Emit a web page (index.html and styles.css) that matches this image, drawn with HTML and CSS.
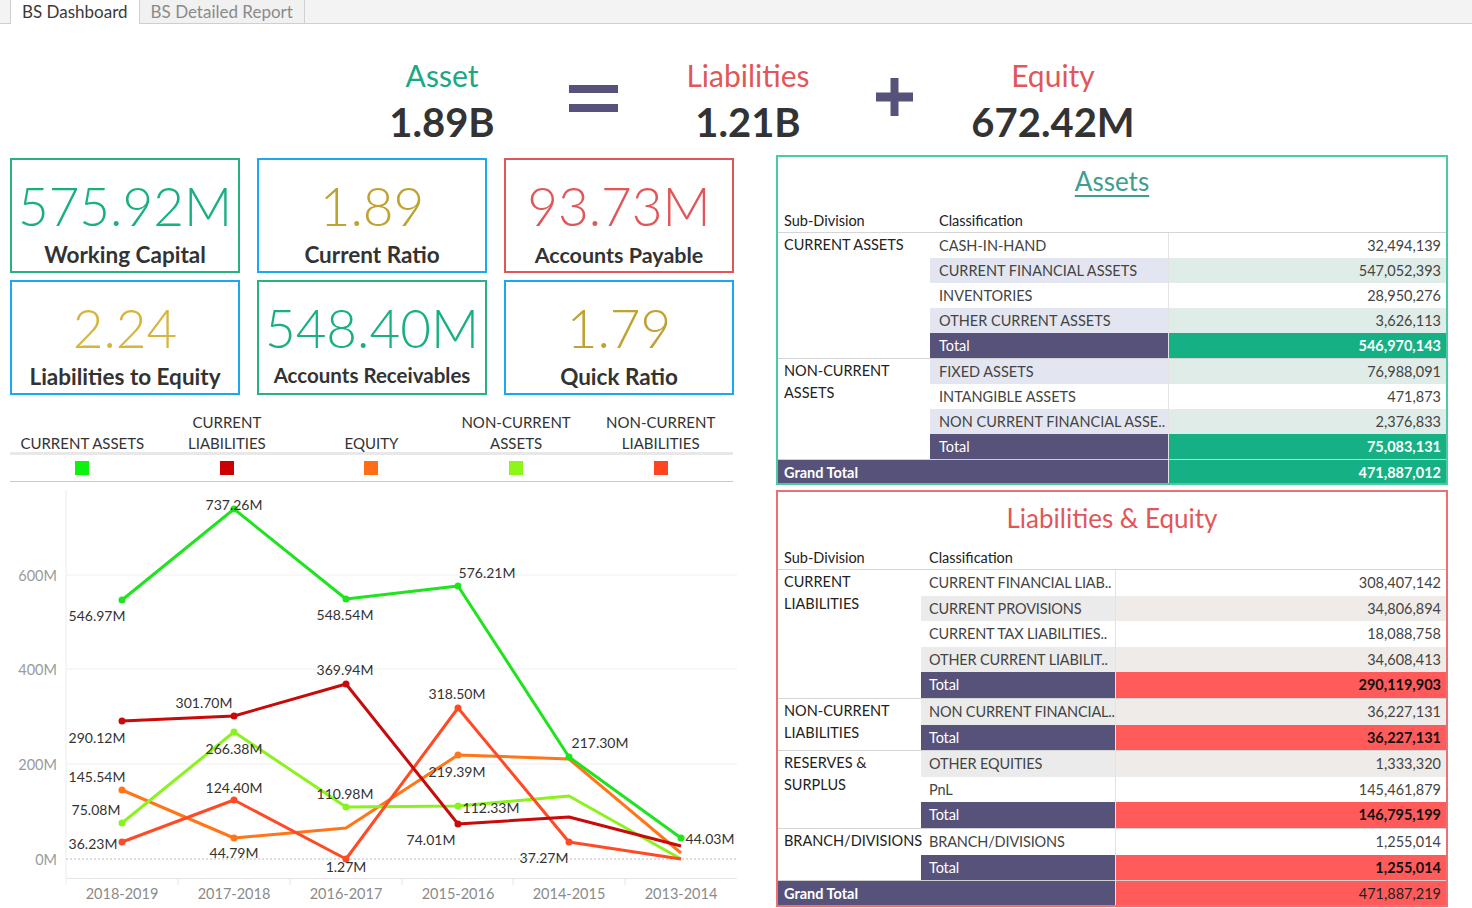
FILE: index.html
```html
<!DOCTYPE html>
<html>
<head>
<meta charset="utf-8">
<link rel="stylesheet" href="styles.css">
</head>
<body>
<div class="tabs">
  <div class="tab active">BS Dashboard</div>
  <div class="tab">BS Detailed Report</div>
</div>

<div class="equation">
  <div class="eq-item w-asset"><div class="eq-label c-green">Asset</div><div class="eq-value">1.89B</div></div>
  <div class="eq-op w-equals">
    <svg width="49" height="27" viewBox="0 0 49 27"><rect x="0" y="0" width="49" height="8" fill="#575279"/><rect x="0" y="19" width="49" height="8" fill="#575279"/></svg>
  </div>
  <div class="eq-item w-liab"><div class="eq-label c-red">Liabilities</div><div class="eq-value">1.21B</div></div>
  <div class="eq-op w-plus">
    <svg width="37" height="38" viewBox="0 0 37 38"><rect x="0" y="14.5" width="37" height="9" fill="#575279"/><rect x="14.5" y="0" width="8" height="38" fill="#575279"/></svg>
  </div>
  <div class="eq-item w-equity"><div class="eq-label c-red">Equity</div><div class="eq-value">672.42M</div></div>
</div>

<div class="main">
  <div class="left">
    <div class="kpis">
      <div class="kpi b-green"><div class="kpi-val v-green">575.92M</div><div class="kpi-lbl">Working Capital</div></div>
      <div class="kpi b-blue"><div class="kpi-val v-gold">1.89</div><div class="kpi-lbl">Current Ratio</div></div>
      <div class="kpi b-red"><div class="kpi-val v-red">93.73M</div><div class="kpi-lbl lbl-ap">Accounts Payable</div></div>
      <div class="kpi b-blue"><div class="kpi-val v-gold2">2.24</div><div class="kpi-lbl">Liabilities to Equity</div></div>
      <div class="kpi b-green"><div class="kpi-val v-green">548.40M</div><div class="kpi-lbl lbl-ar">Accounts Receivables</div></div>
      <div class="kpi b-blue"><div class="kpi-val v-gold">1.79</div><div class="kpi-lbl">Quick Ratio</div></div>
    </div>

    <div class="legend">
      <div class="legend-heads">
        <div class="lh">CURRENT ASSETS</div>
        <div class="lh">CURRENT<br>LIABILITIES</div>
        <div class="lh">EQUITY</div>
        <div class="lh">NON-CURRENT<br>ASSETS</div>
        <div class="lh">NON-CURRENT<br>LIABILITIES</div>
      </div>
      <div class="legend-swatches">
        <div class="ls"><span class="sw sw-ca"></span></div>
        <div class="ls"><span class="sw sw-cl"></span></div>
        <div class="ls"><span class="sw sw-eq"></span></div>
        <div class="ls"><span class="sw sw-na"></span></div>
        <div class="ls"><span class="sw sw-nl"></span></div>
      </div>
    </div>

    <svg class="chart" width="745" height="426" viewBox="0 482 745 426">
      <g class="grid">
        <line x1="66" y1="490" x2="66" y2="885" stroke="#ececec" stroke-width="1"/>
        <line x1="66" y1="575" x2="737" y2="575" stroke="#efefef" stroke-width="1"/>
        <line x1="66" y1="669" x2="737" y2="669" stroke="#efefef" stroke-width="1"/>
        <line x1="66" y1="764" x2="737" y2="764" stroke="#efefef" stroke-width="1"/>
        <line x1="66" y1="859" x2="737" y2="859" stroke="#bdbdbd" stroke-width="1" stroke-dasharray="2 2"/>
        <line x1="66" y1="878.5" x2="737" y2="878.5" stroke="#e6e6e6" stroke-width="1"/>
        <line x1="178" y1="878" x2="178" y2="885" stroke="#e6e6e6"/>
        <line x1="290" y1="878" x2="290" y2="885" stroke="#e6e6e6"/>
        <line x1="402" y1="878" x2="402" y2="885" stroke="#e6e6e6"/>
        <line x1="513" y1="878" x2="513" y2="885" stroke="#e6e6e6"/>
        <line x1="625" y1="878" x2="625" y2="885" stroke="#e6e6e6"/>
      </g>
      <g class="ylab">
        <text x="57" y="581">600M</text>
        <text x="57" y="675">400M</text>
        <text x="57" y="770">200M</text>
        <text x="57" y="865">0M</text>
      </g>
      <g class="xlab">
        <text x="122" y="899">2018-2019</text>
        <text x="234" y="899">2017-2018</text>
        <text x="346" y="899">2016-2017</text>
        <text x="458" y="899">2015-2016</text>
        <text x="569" y="899">2014-2015</text>
        <text x="681" y="899">2013-2014</text>
      </g>
      <g fill="none" stroke-width="3" stroke-linejoin="round">
        <polyline stroke="#ff7518" points="122,790 234,838 346,828 458,755 569,759 681,853"/>
        <polyline stroke="#8cf21e" points="122,823 234,732 346,807 458,806 569,796 681,859"/>
        <polyline stroke="#ff4a26" points="122,842 234,800 346,859 458,708 569,842 681,859"/>
        <polyline stroke="#c80a0a" points="122,721 234,716 346,684 458,824 569,817 681,846"/>
        <polyline stroke="#1fe31f" points="122,600 234,509 346,599 458,586 569,757 681,838"/>
      </g>
      <g>
        <circle cx="122" cy="790" r="3.5" fill="#ff7518"/><circle cx="234" cy="838" r="3.5" fill="#ff7518"/><circle cx="458" cy="755" r="3.5" fill="#ff7518"/>
        <circle cx="122" cy="823" r="3.5" fill="#8cf21e"/><circle cx="234" cy="732" r="3.5" fill="#8cf21e"/><circle cx="346" cy="807" r="3.5" fill="#8cf21e"/><circle cx="458" cy="806" r="3.5" fill="#8cf21e"/>
        <circle cx="122" cy="842" r="3.5" fill="#ff4a26"/><circle cx="234" cy="800" r="3.5" fill="#ff4a26"/><circle cx="346" cy="859" r="3.5" fill="#ff4a26"/><circle cx="458" cy="708" r="3.5" fill="#ff4a26"/><circle cx="569" cy="842" r="3.5" fill="#ff4a26"/>
        <circle cx="122" cy="721" r="3.5" fill="#c80a0a"/><circle cx="234" cy="716" r="3.5" fill="#c80a0a"/><circle cx="346" cy="684" r="3.5" fill="#c80a0a"/><circle cx="458" cy="824" r="3.5" fill="#c80a0a"/>
        <circle cx="122" cy="600" r="3.5" fill="#1fe31f"/><circle cx="234" cy="509" r="3.5" fill="#1fe31f"/><circle cx="346" cy="599" r="3.5" fill="#1fe31f"/><circle cx="458" cy="586" r="3.5" fill="#1fe31f"/><circle cx="569" cy="757" r="3.5" fill="#1fe31f"/><circle cx="681" cy="838" r="3.5" fill="#1fe31f"/>
      </g>
      <g class="dlab">
        <text x="234" y="510">737.26M</text>
        <text x="97" y="621">546.97M</text>
        <text x="345" y="620">548.54M</text>
        <text x="487" y="578">576.21M</text>
        <text x="345" y="675">369.94M</text>
        <text x="204" y="708">301.70M</text>
        <text x="457" y="699">318.50M</text>
        <text x="97" y="743">290.12M</text>
        <text x="600" y="748">217.30M</text>
        <text x="234" y="754">266.38M</text>
        <text x="457" y="777">219.39M</text>
        <text x="97" y="782">145.54M</text>
        <text x="234" y="793">124.40M</text>
        <text x="345" y="799">110.98M</text>
        <text x="491" y="813">112.33M</text>
        <text x="96" y="815">75.08M</text>
        <text x="431" y="845">74.01M</text>
        <text x="710" y="844">44.03M</text>
        <text x="93" y="849">36.23M</text>
        <text x="234" y="858">44.79M</text>
        <text x="544" y="863">37.27M</text>
        <text x="346" y="872">1.27M</text>
      </g>
    </svg>
  </div>

  <div class="right">
    <div class="panel panel-assets">
      <div class="panel-title t-assets">Assets</div>
      <table class="bs bs-assets">
        <colgroup><col class="c-sub-a"><col class="c-cls-a"><col></colgroup>
        <tr class="head"><th>Sub-Division</th><th class="cls">Classification</th><th></th></tr>
        <tr class="grp"><td class="sub" rowspan="5">CURRENT ASSETS</td><td class="cls">CASH-IN-HAND</td><td class="val">32,494,139</td></tr>
        <tr class="shade"><td class="cls">CURRENT FINANCIAL ASSETS</td><td class="val">547,052,393</td></tr>
        <tr><td class="cls">INVENTORIES</td><td class="val">28,950,276</td></tr>
        <tr class="shade"><td class="cls">OTHER CURRENT ASSETS</td><td class="val">3,626,113</td></tr>
        <tr class="total"><td class="cls">Total</td><td class="val">546,970,143</td></tr>
        <tr class="grp shade"><td class="sub" rowspan="4">NON-CURRENT<br>ASSETS</td><td class="cls">FIXED ASSETS</td><td class="val">76,988,091</td></tr>
        <tr><td class="cls">INTANGIBLE ASSETS</td><td class="val">471,873</td></tr>
        <tr class="shade"><td class="cls">NON CURRENT FINANCIAL ASSE..</td><td class="val">2,376,833</td></tr>
        <tr class="total"><td class="cls">Total</td><td class="val">75,083,131</td></tr>
        <tr class="grand"><td colspan="2" class="gl">Grand Total</td><td class="val">471,887,012</td></tr>
      </table>
    </div>

    <div class="panel panel-liab">
      <div class="panel-title t-liab">Liabilities &amp; Equity</div>
      <table class="bs bs-liab">
        <colgroup><col class="c-sub-l"><col class="c-cls-l"><col></colgroup>
        <tr class="head"><th>Sub-Division</th><th class="cls">Classification</th><th></th></tr>
        <tr class="grp"><td class="sub" rowspan="5">CURRENT<br>LIABILITIES</td><td class="cls">CURRENT FINANCIAL LIAB..</td><td class="val">308,407,142</td></tr>
        <tr class="shade"><td class="cls">CURRENT PROVISIONS</td><td class="val">34,806,894</td></tr>
        <tr><td class="cls">CURRENT TAX LIABILITIES..</td><td class="val">18,088,758</td></tr>
        <tr class="shade"><td class="cls">OTHER CURRENT LIABILIT..</td><td class="val">34,608,413</td></tr>
        <tr class="total"><td class="cls">Total</td><td class="val">290,119,903</td></tr>
        <tr class="grp shade"><td class="sub" rowspan="2">NON-CURRENT<br>LIABILITIES</td><td class="cls">NON CURRENT FINANCIAL..</td><td class="val">36,227,131</td></tr>
        <tr class="total"><td class="cls">Total</td><td class="val">36,227,131</td></tr>
        <tr class="grp shade"><td class="sub" rowspan="3">RESERVES &amp;<br>SURPLUS</td><td class="cls">OTHER EQUITIES</td><td class="val">1,333,320</td></tr>
        <tr><td class="cls">PnL</td><td class="val">145,461,879</td></tr>
        <tr class="total"><td class="cls">Total</td><td class="val">146,795,199</td></tr>
        <tr class="grp"><td class="sub nowrap" rowspan="2">BRANCH/DIVISIONS</td><td class="cls">BRANCH/DIVISIONS</td><td class="val">1,255,014</td></tr>
        <tr class="total"><td class="cls">Total</td><td class="val">1,255,014</td></tr>
        <tr class="grand"><td colspan="2" class="gl">Grand Total</td><td class="val">471,887,219</td></tr>
      </table>
    </div>
  </div>
</div>
</body>
</html>
```

FILE: styles.css
```css
html, body {
  margin: 0;
  padding: 0;
}
body {
  width: 1472px;
  height: 908px;
  overflow: hidden;
  background: #ffffff;
  font-family: Lato, "Noto Sans", sans-serif;
  color: #333;
}

/* tabs */
.tabs {
  display: flex;
  height: 23px;
  padding-left: 10px;
  background: #f3f3f3;
  border-bottom: 1px solid #cfcfcf;
}
.tab {
  padding: 0 11px;
  font-size: 17px;
  line-height: 23px;
  color: #8a8a8a;
  border-right: 1px solid #d0d0d0;
  background: #f1f1f1;
}
.tab.active {
  background: #fff;
  color: #3a3a3a;
  border-left: 1px solid #d0d0d0;
  height: 24px;
}

/* equation header */
.equation {
  display: flex;
  height: 131px;
  padding-left: 342px;
}
.eq-item {
  display: flex;
  flex-direction: column;
  align-items: center;
  padding-top: 33px;
}
.eq-label {
  font-size: 30px;
  line-height: 36px;
}
.eq-value {
  margin-top: 6px;
  font-size: 40px;
  line-height: 46px;
  font-weight: 700;
  color: #333;
}
.c-green { color: #1aa882; }
.c-red { color: #e15759; }
.eq-op {
  display: flex;
  justify-content: center;
}
.w-asset { width: 200px; }
.w-equals { width: 102px; padding-top: 61px; }
.w-liab { width: 208px; }
.w-plus { width: 84px; padding-top: 54px; }
.w-equity { width: 234px; }

/* main */
.main {
  display: flex;
}
.left {
  width: 776px;
  flex: none;
}
.right {
  width: 672px;
  flex: none;
}

/* KPI boxes */
.kpis {
  margin: 3px 0 0 10px;
  display: grid;
  grid-template-columns: 230px 230px 230px;
  grid-template-rows: 115px 115px;
  column-gap: 17px;
  row-gap: 7px;
}
.kpi {
  box-sizing: border-box;
  border: 2px solid;
  display: flex;
  flex-direction: column;
  align-items: center;
}
.b-green { border-color: #27b283; }
.b-blue { border-color: #1aa9ef; }
.b-red { border-color: #e15759; }
.kpi-val {
  margin-top: 16px;
  font-size: 53px;
  line-height: 60px;
  font-weight: 300;
}
.kpi-lbl {
  margin-top: 5px;
  height: 28px;
  font-size: 22.5px;
  line-height: 28px;
  font-weight: 700;
  color: #333;
}
.kpi-lbl.lbl-ap { font-size: 21.5px; }
.kpi-lbl.lbl-ar { font-size: 20.5px; line-height: 24px; }
.v-green { color: #18b083; }
.v-gold { color: #bfa230; }
.v-gold2 { color: #d6b43e; }
.v-red { color: #e15759; }

/* legend */
.legend {
  margin-left: 10px;
  width: 723px;
}
.legend-heads {
  display: flex;
  align-items: flex-end;
  height: 57px;
  border-bottom: 3px solid #e8e8e8;
}
.lh {
  flex: 1;
  text-align: center;
  font-size: 15px;
  line-height: 21px;
  color: #333;
  margin-bottom: -2px;
}
.legend-swatches {
  display: flex;
  padding: 6px 0;
  border-bottom: 1px solid #cacaca;
}
.ls {
  flex: 1;
  display: flex;
  justify-content: center;
}
.sw {
  display: block;
  width: 14px;
  height: 14px;
}
.sw-ca { background: #0ef10e; }
.sw-cl { background: #cc0000; }
.sw-eq { background: #ff6e14; }
.sw-na { background: #8cf51a; }
.sw-nl { background: #ff4422; }

/* chart */
.chart {
  display: block;
}
.ylab text {
  font-size: 14.5px;
  fill: #9a9a9a;
  text-anchor: end;
  font-family: Lato, "Noto Sans", sans-serif;
}
.xlab text {
  font-size: 14.5px;
  fill: #8a8a8a;
  text-anchor: middle;
  font-family: Lato, "Noto Sans", sans-serif;
}
.dlab text {
  font-size: 14px;
  fill: #333;
  text-anchor: middle;
  font-family: Lato, "Noto Sans", sans-serif;
}

/* panels */
.panel {
  box-sizing: border-box;
  border: 2px solid;
  overflow: hidden;
}
.panel-assets {
  height: 330px;
  border-color: #4ccaa0;
}
.panel-liab {
  margin-top: 5px;
  height: 417px;
  border-color: #ec7072;
}
.panel-title {
  text-align: center;
  font-size: 26px;
  line-height: 30px;
}
.t-assets {
  padding-top: 9px;
  color: #3f9e8f;
  text-decoration: underline;
  text-decoration-thickness: 2px;
  text-underline-offset: 4px;
}
.t-liab {
  padding-top: 11px;
  color: #e15759;
}

.bs {
  width: 100%;
  border-collapse: collapse;
  table-layout: fixed;
  font-size: 14.5px;
}
.bs-assets { margin-top: 14px; }
.bs-liab { margin-top: 14px; }
.c-sub-a { width: 152px; }
.c-cls-a { width: 238px; }
.c-sub-l { width: 143px; }
.c-cls-l { width: 194px; }

.bs th {
  font-weight: 400;
  text-align: left;
  color: #222;
  padding: 0 0 0 6px;
  height: 22px;
  line-height: 22px;
  white-space: nowrap;
}
.bs th.cls { padding-left: 9px; }
.bs-liab th.cls { padding-left: 8px; }
.bs td {
  padding: 0;
  white-space: nowrap;
  overflow: hidden;
}
.bs-assets td { height: 25px; line-height: 25px; }
.bs-liab td { height: 25.6px; line-height: 25.6px; }
.bs-liab td.cls { letter-spacing: -0.15px; }
.bs td.sub {
  vertical-align: top;
  padding: 0 0 0 6px;
  color: #222;
  white-space: normal;
  line-height: 22px;
  padding-top: 1px;
}
.bs td.sub.nowrap { white-space: nowrap; overflow: visible; }
.bs td.cls {
  padding-left: 9px;
  color: #444;
}
.bs-liab td.cls { padding-left: 8px; }
.bs td.val {
  text-align: right;
  padding-right: 5px;
  color: #444;
  border-left: 1px solid #e3e3e3;
}
.bs tr.grp td { border-top: 1px solid #d5d5d5; }

.bs-assets tr.shade td.cls { background: #e3e6f0; }
.bs-assets tr.shade td.val { background: #dfece8; }
.bs-liab tr.shade td.cls { background: #ebebeb; }
.bs-liab tr.shade td.val { background: #efebe9; }

.bs tr.total td.cls {
  background: #575279;
  color: #fff;
}
.bs-assets tr.total td.val {
  background: #15b084;
  color: #fff;
  font-weight: 700;
}
.bs-liab tr.total td.val {
  background: #ff5b5b;
  color: #111;
  font-weight: 700;
}
.bs tr.grand td.gl {
  background: #575279;
  color: #fff;
  font-weight: 700;
  padding-left: 6px;
}
.bs-assets tr.grand td.val {
  background: #15b084;
  color: #fff;
  font-weight: 700;
}
.bs-liab tr.grand td.val {
  background: #ff5b5b;
  color: #222;
}
.bs tr.grand td { border-top: 1px solid #d0d0d0; }
```
